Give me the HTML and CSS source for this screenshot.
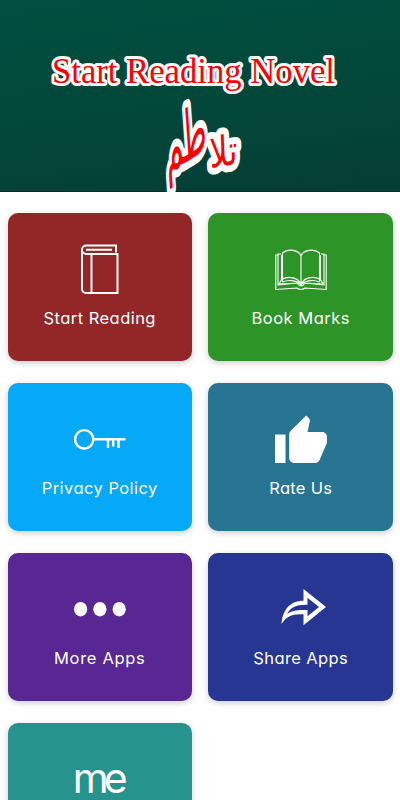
FILE: index.html
```html
<!DOCTYPE html>
<html lang="en">
<head>
  <meta charset="UTF-8" />
  <meta name="viewport" content="width=device-width, initial-scale=1.0" />
  <title>Start Reading Novel</title>
  <link rel="stylesheet" href="styles.css">
</head>
<body>
  <header class="banner">
    <svg class="banner-title" viewBox="0 0 400 192">
      <text class="title-en" x="52" y="82.500" textLength="283" lengthAdjust="spacingAndGlyphs">Start Reading Novel</text>
      <g class="title-ur">
        <text transform="translate(210 168) rotate(-8) skewX(-6) scale(1 1.3)">تلا</text>
        <text transform="translate(167 174) rotate(-32) skewX(-28) scale(1.02 1.9)">طم</text>
      </g>
    </svg>
  </header>

  <main class="menu">
    <a class="card red">
      <svg class="icon" viewBox="0 0 52 52" fill="none" stroke="#fff" stroke-width="2">
        <path d="M42 9.500V2.500H12.500A4.500 4 0 0 0 8 6.500V46A4 4 0 0 0 12 50H43.500V11H12.500A4.500 4 0 0 1 8 6.500M17.500 11V50M12 6.700H38"/>
      </svg>
      <span class="label l-start">Start Reading</span>
    </a>
    <a class="card green">
      <svg class="icon" viewBox="0 0 52 52" fill="none" stroke="#fff" stroke-width="1.100">
        <path d="M26 13C24 7 13 5 7.500 10V39M26 13C28 7 39 5 44.500 10V39M26 13V42M7.500 36C13 33 24 34 26 42C28 34 39 33 44.500 36M7.500 39C15 36 23 38 26 42C29 38 37 36 44.500 39M6 11H3V42L22 40Q24 43 26 43Q28 43 30 40L49 42V11H46M3 12H.800V46.500L22 45Q26 48 30 45L51.200 46.500V12H49M7.500 35L4 41L23 40M44.500 35L48 41L29 40"/>
        <path stroke-width="2" d="M7 12V36M45 12V36"/>
      </svg>
      <span class="label l-marks">Book Marks</span>
    </a>
    <a class="card sky">
      <svg class="icon" viewBox="0 0 52 52" fill="none" stroke="#fff" stroke-width="2.400">
        <circle cx="10.200" cy="26.300" r="9.200"/>
        <path stroke-linecap="round" d="M20 26.300H50.500"/>
        <path d="M34 27V35M39.200 27V33.500M44.500 27V35"/>
      </svg>
      <span class="label l-privacy">Privacy Policy</span>
    </a>
    <a class="card steel">
      <svg class="icon" viewBox="0 0 52 52" fill="#fff">
        <path d="M0 21.500H10.500V50H0ZM52 23.800A4.800 4.800 0 0 0 47.200 19H32.500L34.800 8.300V7.500C34.800 6.500 34.400 5.600 33.700 5L31.200 2.500L15.600 18.100C14.700 19 14.200 20.200 14.200 21.500V45.300A4.700 4.700 0 0 0 18.900 50H40.200C42.200 50 43.800 48.800 44.600 47.100L51.700 30.400C51.900 29.800 52 29.200 52 28.600Z"/>
      </svg>
      <span class="label l-rate">Rate Us</span>
    </a>
    <a class="card purple">
      <svg class="icon" viewBox="0 0 52 52" fill="#fff">
        <ellipse cx="6.600" cy="26.200" rx="6.600" ry="7.200"/>
        <ellipse cx="25.900" cy="26.200" rx="6.600" ry="7.200"/>
        <ellipse cx="45.200" cy="26.200" rx="6.600" ry="7.200"/>
      </svg>
      <span class="label l-more">More Apps</span>
    </a>
    <a class="card indigo">
      <svg class="icon" viewBox="0 0 52 52">
        <path fill="#fff" fill-rule="evenodd" d="M6.500 41C7.500 28 14 17.800 28.500 17.800V6L51 24L28.500 42.300V31.300C18 30.500 11.500 33 6.500 41ZM12 31C16.500 27.500 22.500 26.500 32.500 27V33.300L44 24L32.500 14.800V21.800C21 21.500 15.500 24.500 12 31Z"/>
      </svg>
      <span class="label l-share">Share Apps</span>
    </a>
    <a class="card teal">
      <span class="icon me">me</span>
    </a>
  </main>
</body>
</html>
```

FILE: styles.css
```css
* { box-sizing: border-box; }
body {
  margin: 0;
  height: 100vh;
  overflow: hidden;
  background: #fff;
  font-family: Inter, "Open Sans", sans-serif;
}
.banner {
  height: 192px;
  background: linear-gradient(172deg, #004f40 0%, #02483b 50%, #053d35 100%);
  border-bottom: 1px solid #032f28;
}
.banner-title {
  display: block;
  width: 400px;
  height: 192px;
}
.banner-title text {
  fill: #fe0000;
  stroke: #fff;
  stroke-linejoin: round;
  paint-order: stroke;
}
.title-en {
  font-family: "Liberation Serif", serif;
  font-size: 36px;
  stroke-width: 6px;
}
.title-ur {
  font-family: "DejaVu Sans", sans-serif;
  font-size: 32px;
}
.title-ur text {
  stroke-width: 12px;
  vector-effect: non-scaling-stroke;
}
.menu {
  display: grid;
  grid-template-columns: 1fr 1fr;
  gap: 22px 16px;
  padding: 21px 7.5px;
}
.card {
  display: flex;
  flex-direction: column;
  align-items: center;
  height: 148px;
  padding-top: 30px;
  border-radius: 10px;
  color: #fff;
  box-shadow: 0 2px 6px rgba(0, 0, 0, 0.2);
}
.icon {
  width: 52px;
  height: 52px;
}
.label {
  margin-top: 13px;
  font-size: 16.5px;
  line-height: 21px;
  font-feature-settings: "cv11";
  white-space: nowrap;
}
.l-start, .l-privacy { letter-spacing: 0.45px; }
.l-marks { letter-spacing: 0.5px; }
.l-rate { letter-spacing: 0.3px; }
.l-more { letter-spacing: 0.7px; }
.l-share { letter-spacing: 0.4px; }
.green .icon, .steel .icon, .indigo .icon,
.green .label, .steel .label, .indigo .label { margin-left: 1px; }
.me {
  display: flex;
  justify-content: center;
  font-size: 41px;
  font-weight: 400;
  line-height: 50px;
  letter-spacing: -5px;
  text-indent: -4px;
}
.red { background: #932727; }
.green { background: #2d9427; }
.sky { background: #05a9f7; }
.steel { background: #277493; }
.purple { background: #582793; }
.indigo { background: #273593; }
.teal { background: #27938d; }
```
